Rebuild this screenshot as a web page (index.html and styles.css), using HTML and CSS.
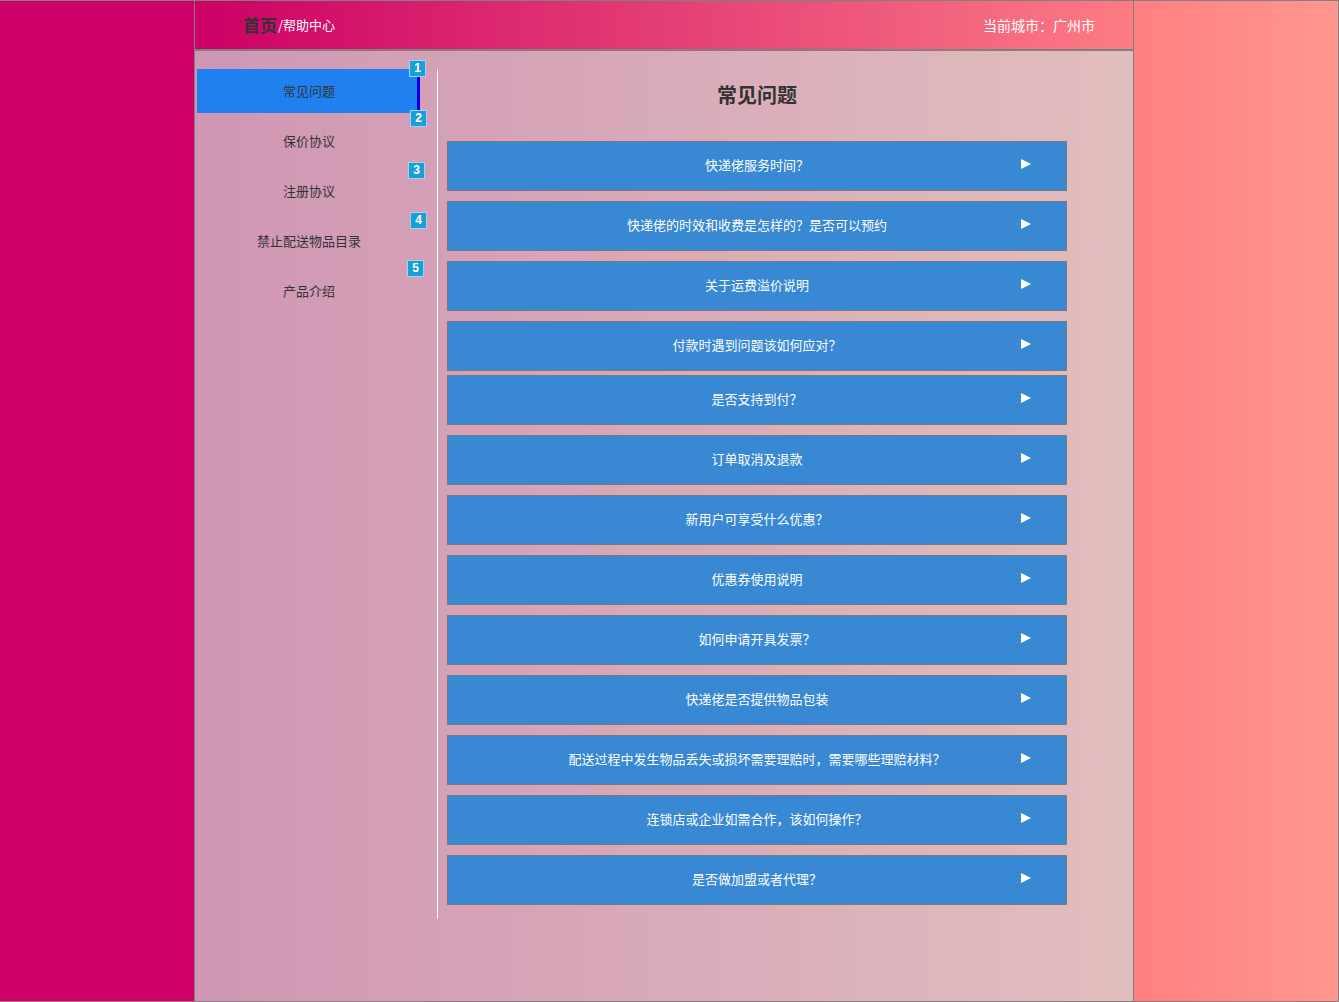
FILE: index.html
```html
<!DOCTYPE html>
<html lang="zh-CN">
<head>
<meta charset="utf-8">
<title>帮助中心</title>
<link rel="stylesheet" href="styles.css">
</head>
<body>
<div class="page">
  <div class="wrap">
    <header class="header">
      <div class="crumb"><span class="home">首页</span><span class="sep">/</span><span class="cur">帮助中心</span></div>
      <div class="city">当前城市：广州市</div>
    </header>
    <div class="content">
      <nav class="sidebar">
        <div class="nav-item active b1">常见问题<span class="badge">1</span></div>
        <div class="nav-item b2">保价协议<span class="badge">2</span></div>
        <div class="nav-item b3">注册协议<span class="badge">3</span></div>
        <div class="nav-item b4">禁止配送物品目录<span class="badge">4</span></div>
        <div class="nav-item b5">产品介绍<span class="badge">5</span></div>
      </nav>
      <main class="main">
        <h2 class="title">常见问题</h2>
        <div class="faq-list">
          <div class="faq"><span></span><span class="q">快递佬服务时间？</span><svg class="arrow" width="10" height="10" viewBox="0 0 10 10"><polygon points="0,0 10,5 0,10" fill="#fff"/></svg></div>
          <div class="faq"><span></span><span class="q">快递佬的时效和收费是怎样的？是否可以预约</span><svg class="arrow" width="10" height="10" viewBox="0 0 10 10"><polygon points="0,0 10,5 0,10" fill="#fff"/></svg></div>
          <div class="faq"><span></span><span class="q">关于运费溢价说明</span><svg class="arrow" width="10" height="10" viewBox="0 0 10 10"><polygon points="0,0 10,5 0,10" fill="#fff"/></svg></div>
          <div class="faq"><span></span><span class="q">付款时遇到问题该如何应对？</span><svg class="arrow" width="10" height="10" viewBox="0 0 10 10"><polygon points="0,0 10,5 0,10" fill="#fff"/></svg></div>
          <div class="faq tight"><span></span><span class="q">是否支持到付？</span><svg class="arrow" width="10" height="10" viewBox="0 0 10 10"><polygon points="0,0 10,5 0,10" fill="#fff"/></svg></div>
          <div class="faq"><span></span><span class="q">订单取消及退款</span><svg class="arrow" width="10" height="10" viewBox="0 0 10 10"><polygon points="0,0 10,5 0,10" fill="#fff"/></svg></div>
          <div class="faq"><span></span><span class="q">新用户可享受什么优惠？</span><svg class="arrow" width="10" height="10" viewBox="0 0 10 10"><polygon points="0,0 10,5 0,10" fill="#fff"/></svg></div>
          <div class="faq"><span></span><span class="q">优惠券使用说明</span><svg class="arrow" width="10" height="10" viewBox="0 0 10 10"><polygon points="0,0 10,5 0,10" fill="#fff"/></svg></div>
          <div class="faq"><span></span><span class="q">如何申请开具发票？</span><svg class="arrow" width="10" height="10" viewBox="0 0 10 10"><polygon points="0,0 10,5 0,10" fill="#fff"/></svg></div>
          <div class="faq"><span></span><span class="q">快递佬是否提供物品包装</span><svg class="arrow" width="10" height="10" viewBox="0 0 10 10"><polygon points="0,0 10,5 0,10" fill="#fff"/></svg></div>
          <div class="faq"><span></span><span class="q">配送过程中发生物品丢失或损坏需要理赔时，需要哪些理赔材料？</span><svg class="arrow" width="10" height="10" viewBox="0 0 10 10"><polygon points="0,0 10,5 0,10" fill="#fff"/></svg></div>
          <div class="faq"><span></span><span class="q">连锁店或企业如需合作，该如何操作？</span><svg class="arrow" width="10" height="10" viewBox="0 0 10 10"><polygon points="0,0 10,5 0,10" fill="#fff"/></svg></div>
          <div class="faq"><span></span><span class="q">是否做加盟或者代理？</span><svg class="arrow" width="10" height="10" viewBox="0 0 10 10"><polygon points="0,0 10,5 0,10" fill="#fff"/></svg></div>
        </div>
      </main>
    </div>
  </div>
</div>
</body>
</html>
```

FILE: styles.css
```css
* { box-sizing: border-box; }
html, body { margin: 0; padding: 0; }
body {
  font-family: "Noto Sans CJK SC", "Noto Sans", sans-serif;
  width: 1339px;
  height: 1002px;
  overflow: hidden;
}
.page {
  height: 1002px;
  border: 1px solid #808080;
  border-left: 0;
  background: linear-gradient(to right, #cc0066 0, #cc0066 194px, #ff8080 1134px, #ff9690 1338px);
}
.wrap {
  margin-left: 194px;
  width: 940px;
  height: 1000px;
  border-left: 1px solid #808080;
  border-right: 1px solid #808080;
  display: flex;
  flex-direction: column;
}
.header {
  height: 50px;
  border-bottom: 2px solid #808080;
  background: linear-gradient(to right, #cc0066, #fc7c84);
  display: flex;
  align-items: center;
  justify-content: space-between;
  padding: 0 38px 1px 48px;
}
.crumb { display: flex; align-items: center; }
.home { font-size: 17px; font-weight: bold; color: #333; line-height: 24px; }
.sep { font-size: 13px; color: #fff; margin-left: 1px; line-height: 20px; }
.cur { font-size: 13px; color: #fff; line-height: 20px; }
.city { font-size: 14px; color: #fff; line-height: 20px; }
.content {
  flex: 1;
  background: linear-gradient(to right, #d096b4, #e1bebe);
  display: flex;
  align-items: flex-start;
  padding: 18px 0 0 2px;
}
.sidebar {
  width: 223px;
  display: flex;
  flex-direction: column;
  gap: 6px;
}
.nav-item {
  position: relative;
  height: 44px;
  line-height: 44px;
  text-align: center;
  font-size: 13px;
  color: #333;
  padding-left: 4px;
  border-right: 3px solid transparent;
}
.nav-item.active {
  background: #2080f0;
  border-right-color: #0000e6;
}
.badge {
  position: absolute;
  top: -8px;
  right: -6px;
  width: 17px;
  height: 17px;
  border: 1px solid #9cd6ee;
  background: #1a9ed8;
  color: #fff;
  font-family: "Liberation Sans", Arial, sans-serif;
  font-size: 12px;
  font-weight: bold;
  line-height: 15px;
  text-align: center;
}
.b1 .badge { top: -9px; right: -9px; }
.b2 .badge { top: -9px; right: -10px; }
.b3 .badge { top: -7px; right: -8px; }
.b4 .badge { top: -7px; right: -10px; }
.b5 .badge { top: -9px; right: -7px; }
.main {
  margin-left: 17px;
  width: 631px;
  height: 850px;
  border-left: 1px solid #ffffff;
  padding-left: 9px;
}
.title {
  margin: 0;
  padding-top: 11px;
  height: 72px;
  line-height: 30px;
  font-size: 20px;
  font-weight: bold;
  color: #333;
  text-align: center;
  width: 620px;
}
.faq-list {
  width: 620px;
  display: flex;
  flex-direction: column;
  gap: 10px;
}
.faq {
  height: 50px;
  border: 1px solid #7a7a7a;
  background: #3888d4;
  display: grid;
  grid-template-columns: 1fr auto 1fr;
  align-items: center;
  color: #fff;
  font-size: 13px;
}
.faq.tight { margin-top: -6px; }
.q { text-align: center; line-height: 20px; margin-top: -3px; }
.arrow { justify-self: end; margin-right: 35px; margin-top: -5px; }
```
